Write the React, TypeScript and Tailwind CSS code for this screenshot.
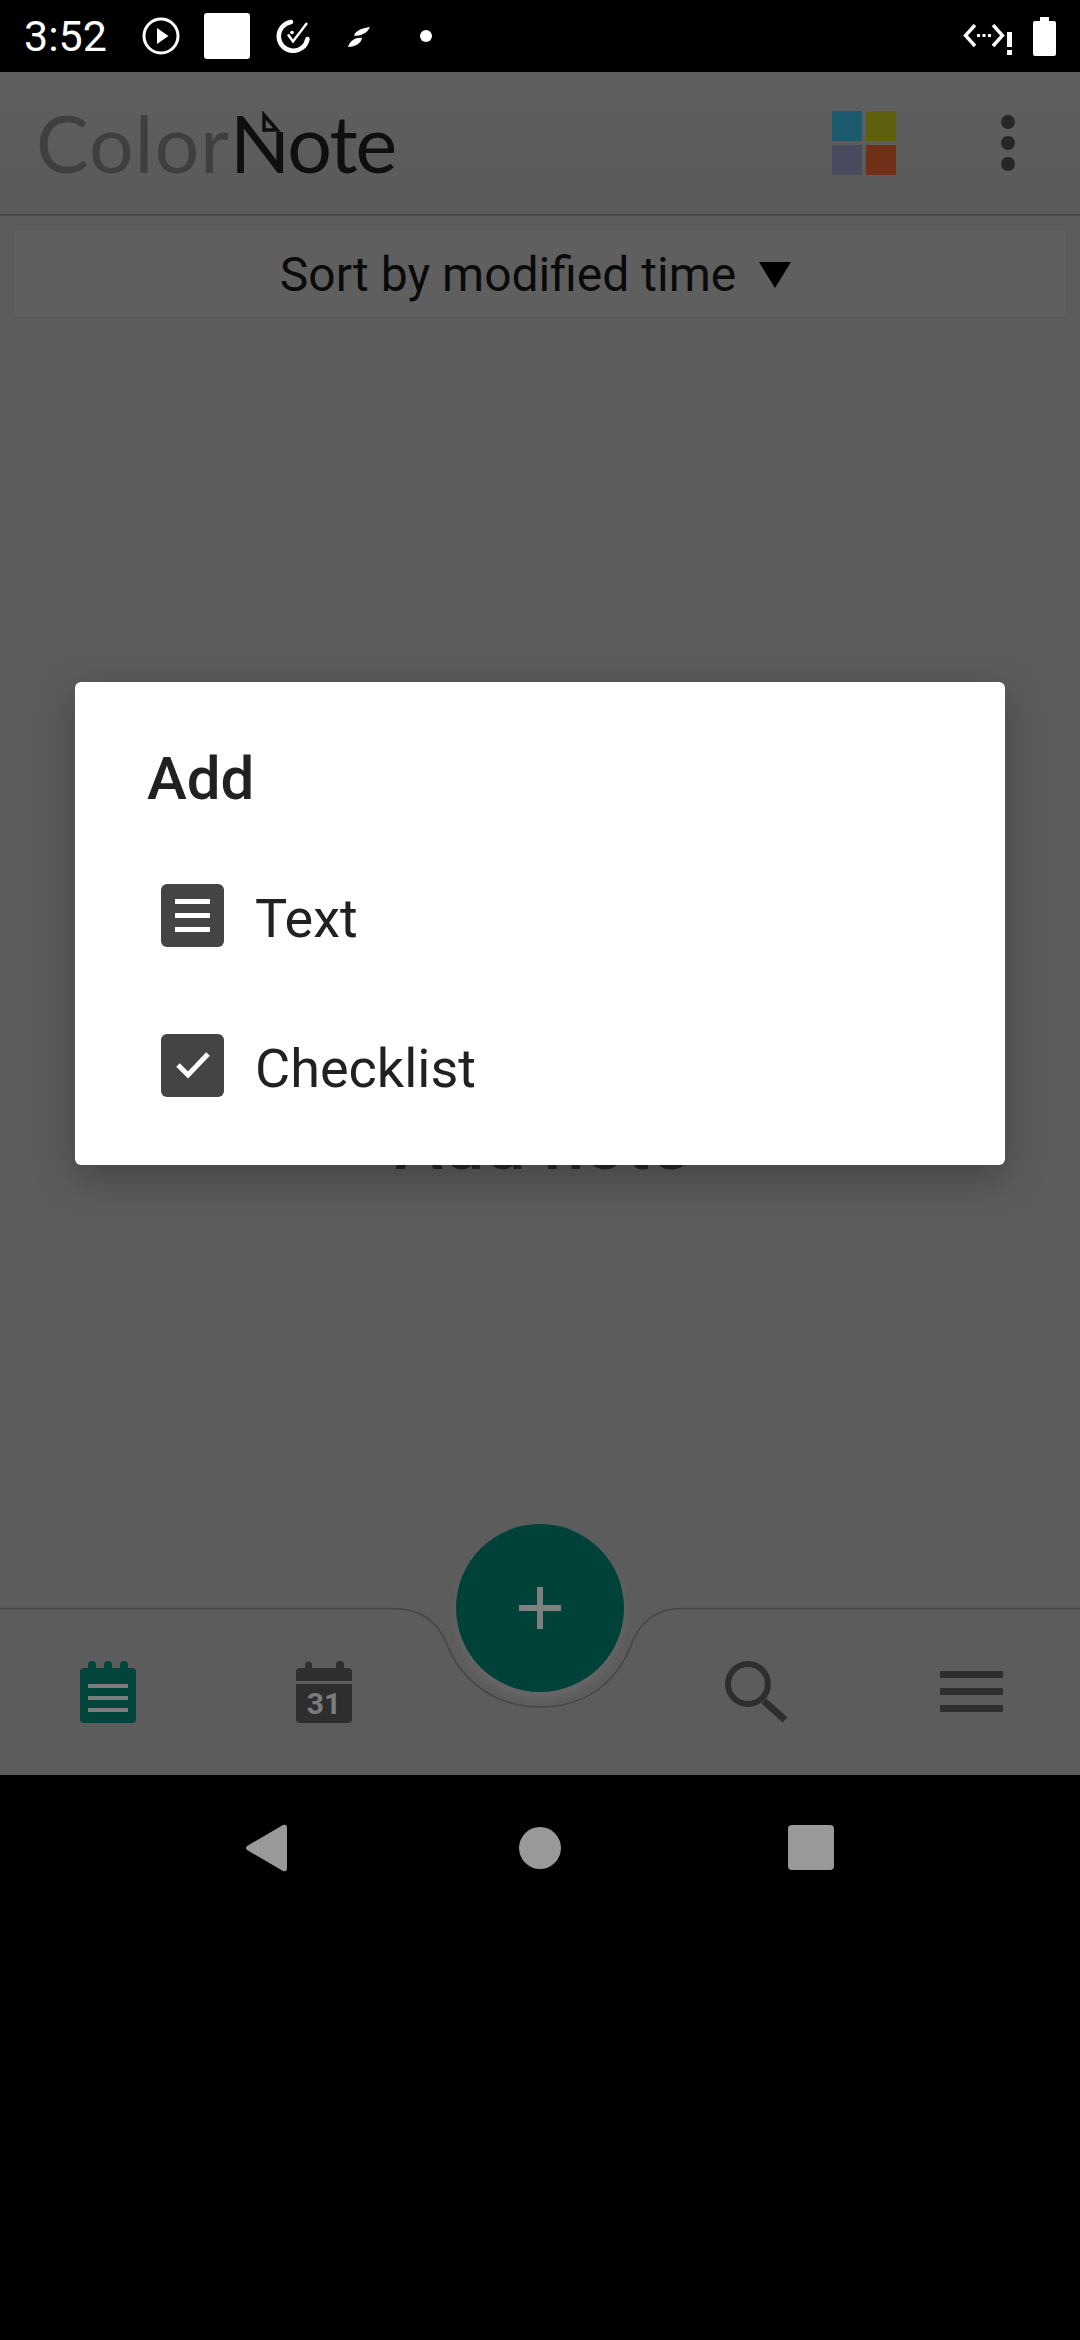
import React from "react";

function PlayCircle() {
  return (
    <svg width="38" height="38" viewBox="0 0 38 38" className="shrink-0">
      <circle cx="19" cy="19" r="17" fill="none" stroke="#fff" strokeWidth="3" />
      <path d="M15 11 L26.5 19 L15 27 Z" fill="#fff" />
    </svg>
  );
}

function CheckCircle() {
  return (
    <svg width="34" height="34" viewBox="0 0 34 34" className="shrink-0">
      <path d="M15 3 A14.5 14.5 0 1 0 31.5 20" fill="none" stroke="#fff" strokeWidth="4.5" strokeLinecap="round" />
      <path d="M12 15.5 L17 22.5 L31 4" fill="none" stroke="#fff" strokeWidth="2.5" />
      <circle cx="16" cy="13.5" r="1.8" fill="#fff" />
    </svg>
  );
}

function Leaf() {
  return (
    <svg width="22" height="20" viewBox="0 0 22 20" className="shrink-0">
      <path d="M22 0 C15 1 8 3 6 8.5 C11 9.5 19 7 22 0 Z" fill="#fff" />
      <path d="M0 20 C6 20 13 17 14 11 C9 10 2 13 0 20 Z" fill="#fff" />
    </svg>
  );
}

function DataIcon() {
  return (
    <svg width="50" height="32" viewBox="0 0 50 32" className="shrink-0">
      <path d="M12 1 L2.5 11.5 L12 22" fill="none" stroke="#fff" strokeWidth="3.4" />
      <path d="M30 1 L39.5 11.5 L30 22" fill="none" stroke="#fff" strokeWidth="3.4" />
      <rect x="14" y="10" width="3" height="3" fill="#fff" />
      <rect x="19.5" y="10" width="3" height="3" fill="#fff" />
      <rect x="25" y="10" width="3" height="3" fill="#fff" />
      <rect x="44" y="8" width="5" height="15" fill="#fff" />
      <rect x="44" y="26" width="5" height="5" fill="#fff" />
    </svg>
  );
}

function Battery() {
  return (
    <svg width="23" height="39" viewBox="0 0 23 39" className="shrink-0">
      <path d="M7 0 H16 V4 H21 Q23 4 23 6 V37 Q23 39 21 39 H2 Q0 39 0 37 V6 Q0 4 2 4 H7 Z" fill="#fff" />
    </svg>
  );
}

function NotesIcon() {
  return (
    <svg width="56" height="62" viewBox="0 0 56 62" className="block">
      <path d="M8 7 V4 A4 4 0 0 1 16 4 V7 H24 V4 A4 4 0 0 1 32 4 V7 H40 V4 A4 4 0 0 1 48 4 V7 H52 Q56 7 56 11 V58 Q56 62 52 62 H4 Q0 62 0 58 V11 Q0 7 4 7 Z" fill="#00443c" />
      <rect x="8" y="23" width="40" height="4" fill="#7c7c7c" />
      <rect x="8" y="35" width="40" height="4" fill="#7c7c7c" />
      <rect x="8" y="47" width="40" height="4" fill="#7c7c7c" />
    </svg>
  );
}

function CalendarIcon() {
  return (
    <div className="relative h-[62px] w-[56px]">
      <svg width="56" height="62" viewBox="0 0 56 62" className="block">
        <path d="M9 7 V4 A3.5 3.5 0 0 1 16 4 V7 H40 V4 A4 4 0 0 1 48 4 V7 H52 Q56 7 56 11 V20 H0 V11 Q0 7 4 7 Z" fill="#2e2e2e" />
        <path d="M0 23 H56 V58 Q56 62 52 62 H4 Q0 62 0 58 Z" fill="#2e2e2e" />
      </svg>
      <span className="absolute inset-x-0 top-[26px] text-center font-['Roboto'] text-[30px] leading-[34px] font-bold text-[#7c7c7c]">31</span>
    </div>
  );
}

function SearchIcon() {
  return (
    <svg width="62" height="62" viewBox="0 0 62 62" className="block">
      <circle cx="23" cy="23" r="20" fill="none" stroke="#2e2e2e" strokeWidth="6" />
      <path d="M39 40 L60 59" stroke="#2e2e2e" strokeWidth="7" />
    </svg>
  );
}

function Row({ label, children }: { label: string; children: React.ReactNode }) {
  return (
    <div className="flex h-[150px] items-center pl-[86px]">
      <div className="flex h-[63px] w-[63px] items-center justify-center rounded-[6px] bg-[#444444]">{children}</div>
      <span className="ml-[31px] pt-[7px] text-[54px] leading-[62px] text-[#212121]">{label}</span>
    </div>
  );
}

export default function App() {
  return (
    <div className="relative flex h-[2340px] w-[1080px] flex-col overflow-hidden bg-black font-['Roboto',sans-serif]">
      {/* status bar */}
      <div className="flex h-[72px] shrink-0 items-center justify-between bg-black pr-[24px] pl-[24px]">
        <div className="flex items-center">
          <span className="w-[118px] text-[43px] leading-[50px] text-white">3:52</span>
          <PlayCircle />
          <div className="ml-[24px] h-[46px] w-[46px] rounded-[3px] bg-white" />
          <div className="ml-[26px]"><CheckCircle /></div>
          <div className="mt-[2px] ml-[38px]"><Leaf /></div>
          <div className="ml-[50px] h-[12px] w-[12px] rounded-full bg-white" />
        </div>
        <div className="flex items-center gap-[20px]">
          <div className="mt-[8px]"><DataIcon /></div>
          <Battery />
        </div>
      </div>

      {/* header */}
      <div className="flex h-[144px] shrink-0 items-center justify-between border-b-2 border-[#4a4a4a] bg-gradient-to-b from-[#5f5f5f] to-[#5a5a5a] pr-[65px] pl-[36px]">
        <div className="relative flex h-[100px] items-center font-['Lato'] text-[79px] leading-[100px] font-normal">
          <span className="tracking-[1px] text-[#3f3f3f]">Color</span>
          <span className="text-[#0f0f0f]">N</span>
          <span className="-ml-[3px] tracking-[-2px] text-[#0f0f0f]">ote</span>
          <svg width="26" height="26" viewBox="0 0 26 26" className="absolute top-[18px] left-[225px]">
            <rect x="0" y="0" width="26" height="21" fill="#5d5d5d" />
            <path d="M3 4 L16 19 H3 Z" fill="none" stroke="#0f0f0f" strokeWidth="3.5" />
          </svg>
        </div>
        <div className="flex items-center gap-[105px]">
          <div className="grid grid-cols-[30px_30px] grid-rows-[30px_30px] gap-[4px]">
            <div className="bg-[#1c5a6e]" />
            <div className="bg-[#5e6010]" />
            <div className="bg-[#4a4a5e]" />
            <div className="bg-[#703018]" />
          </div>
          <div className="flex flex-col gap-[7px]">
            <div className="h-[14px] w-[14px] rounded-full bg-[#262626]" />
            <div className="h-[14px] w-[14px] rounded-full bg-[#262626]" />
            <div className="h-[14px] w-[14px] rounded-full bg-[#262626]" />
          </div>
        </div>
      </div>

      {/* main */}
      <div className="relative flex flex-1 flex-col bg-[#5c5c5c]">
        <div className="mx-[13px] mt-[13px] flex h-[89px] items-center justify-center gap-[23px] border border-[#565656] bg-[#5f5f5f] pr-[9px]">
          <span className="pt-[2px] text-[48px] leading-[56px] text-[#0a0a0a]">Sort by modified time</span>
          <div className="mt-[2px] h-0 w-0 border-x-[16px] border-t-[26px] border-x-transparent border-t-black" />
        </div>
        <div className="flex-1" />
        <div className="mb-[422px] pl-[4px] text-center text-[73px] leading-[84px] font-medium text-[#262626]">Add note</div>
        {/* bottom bar */}
        <div className="relative h-[167px] shrink-0">
          <div className="flex h-full items-start pt-[53px]">
            <div className="ml-[80px]"><NotesIcon /></div>
            <div className="ml-[160px]"><CalendarIcon /></div>
            <div className="ml-[373px]"><SearchIcon /></div>
            <div className="mt-[10px] ml-[153px] flex w-[63px] flex-col gap-[10px]">
              <div className="h-[7px] bg-[#2e2e2e]" />
              <div className="h-[7px] bg-[#2e2e2e]" />
              <div className="h-[7px] bg-[#2e2e2e]" />
            </div>
          </div>
        </div>
      </div>

      {/* system nav */}
      <div className="flex h-[565px] shrink-0 items-start bg-black pt-[49px]">
        <svg width="42" height="48" viewBox="0 0 42 48" className="ml-[245px]">
          <path d="M38 1 Q42 0 42 4 V44 Q42 48 38 47 L2 26 Q0 24 2 22 Z" fill="#999999" />
        </svg>
        <div className="mt-[3px] ml-[232px] h-[42px] w-[42px] rounded-full bg-[#999999]" />
        <div className="mt-[1px] ml-[227px] h-[45px] w-[46px] rounded-[4px] bg-[#999999]" />
      </div>

      {/* bottom bar curve */}
      <svg width="1080" height="110" viewBox="0 1600 1080 110" className="absolute top-[1600px] left-0">
        <path d="M0 1608.5 H392 C420 1608.5 436 1620 446 1642 C458 1675 490 1707 540 1707 C590 1707 620 1678 633 1640 C642 1622 655 1608.5 682 1608.5 H1080" fill="none" stroke="#464646" strokeWidth="1.5" />
      </svg>

      {/* FAB */}
      <div className="absolute top-[1524px] left-[456px] flex h-[168px] w-[168px] items-center justify-center rounded-full bg-[#00423a] shadow-[0_6px_10px_rgba(255,255,255,0.08)]">
        <svg width="42" height="42" viewBox="0 0 42 42">
          <rect x="0" y="18" width="42" height="6" fill="#808080" />
          <rect x="18" y="0" width="6" height="42" fill="#808080" />
        </svg>
      </div>

      {/* dialog */}
      <div className="absolute top-[682px] left-[75px] h-[483px] w-[930px] rounded-[6px] bg-white shadow-[0_12px_40px_rgba(0,0,0,0.28)]">
        <div className="h-[158px] pt-[62px] pl-[72px] text-[60px] leading-[70px] font-medium text-[#212121]">Add</div>
        <div>
          <Row label="Text">
            <div className="flex w-[35px] flex-col gap-[9px]">
              <div className="h-[5px] bg-white" />
              <div className="h-[5px] bg-white" />
              <div className="h-[5px] bg-white" />
            </div>
          </Row>
          <Row label="Checklist">
            <svg width="34" height="28" viewBox="0 0 34 28">
              <path d="M2 14 L12 24 L32 3" fill="none" stroke="#fff" strokeWidth="5" />
            </svg>
          </Row>
        </div>
      </div>
    </div>
  );
}
